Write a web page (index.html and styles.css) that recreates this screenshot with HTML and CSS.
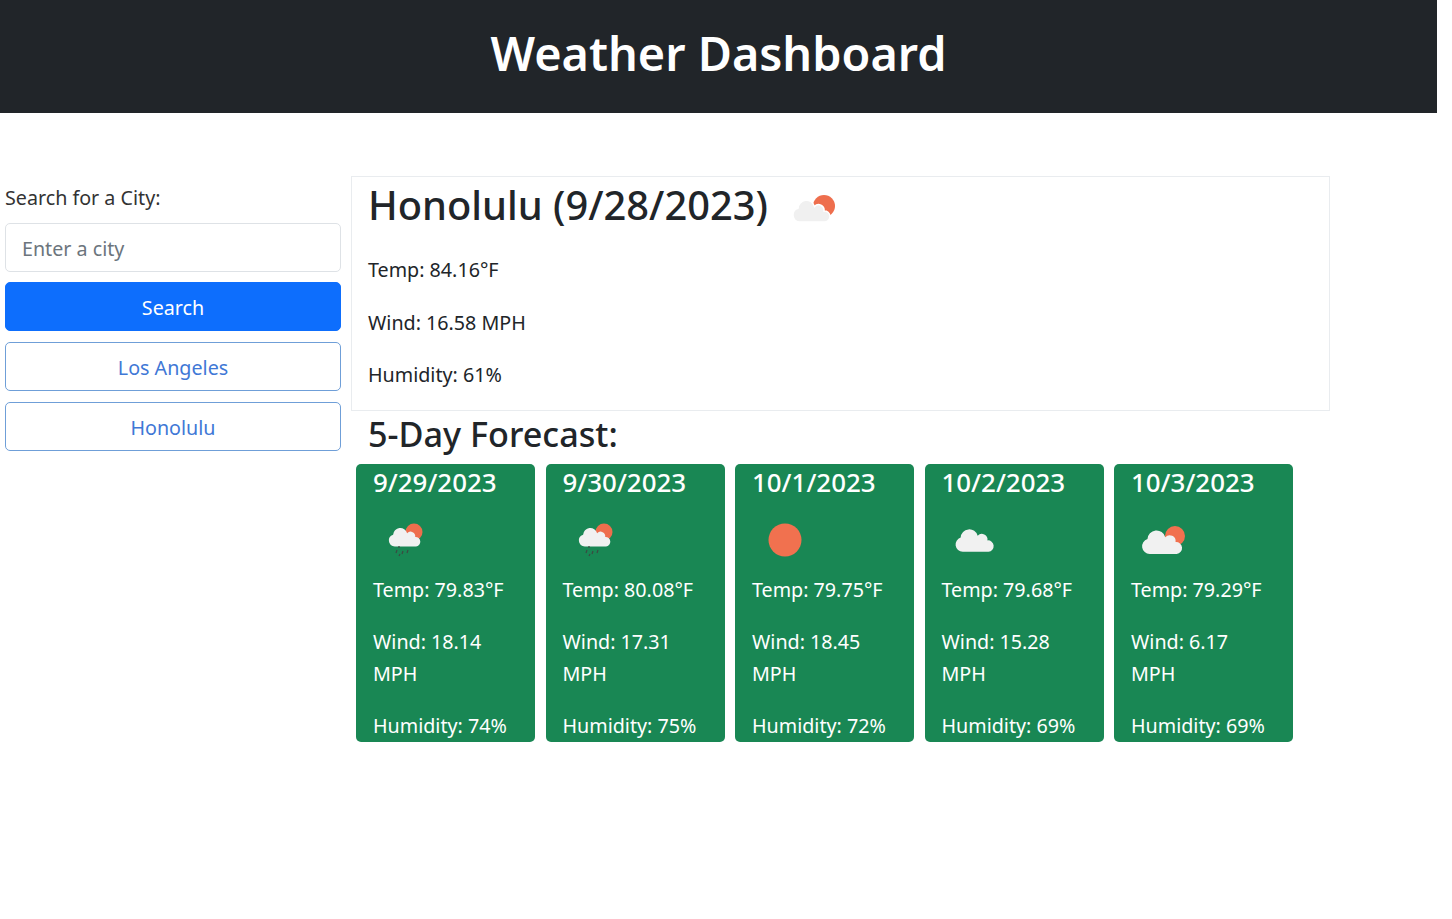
FILE: index.html
```html
<!DOCTYPE html>
<html lang="en">
<head>
    <meta charset="UTF-8">
    <meta name="viewport" content="width=device-width, initial-scale=1.0">
    <title>Weather Dashboard</title>
    <link rel="stylesheet" href="styles.css">
</head>
<body>
    <svg class="icon-defs" width="0" height="0">
        <defs>
            <path id="cloud" d="M8 24a7 7 0 0 1-2-13.700A8.400 8.400 0 0 1 22.500 8.500 5.500 5.500 0 0 1 32 13a5.500 5.500 0 0 1 1 11z"/>
        </defs>
    </svg>

    <header class="page-header">
        <h1>Weather Dashboard</h1>
    </header>

    <main class="layout">
        <aside class="search-panel">
            <label class="search-label" for="city">Search for a City:</label>
            <input class="search-input" type="text" id="city" placeholder="Enter a city">
            <button class="btn btn-primary" type="button">Search</button>
            <button class="btn btn-outline" type="button">Los Angeles</button>
            <button class="btn btn-outline" type="button">Honolulu</button>
        </aside>

        <section class="results">
            <div class="current">
                <h2 class="current-title">
                    <span>Honolulu (9/28/2023)</span>
                    <svg class="current-icon" viewBox="0 0 48 40" width="48" height="40">
                        <circle cx="32" cy="21" r="11" fill="#ee6e4d"/>
                        <use href="#cloud" transform="translate(0 13) scale(1)" fill="#f0f0f0" stroke="#fff" stroke-width="1.500"/>
                    </svg>
                </h2>
                <p>Temp: 84.16°F</p>
                <p>Wind: 16.58 MPH</p>
                <p>Humidity: 61%</p>
            </div>

            <h3 class="forecast-title">5-Day Forecast:</h3>

            <div class="forecast">
                <article class="day">
                    <h4>9/29/2023</h4>
                    <svg class="day-icon" viewBox="0 0 66 66" width="66" height="66">
                        <circle cx="41" cy="25" r="8.500" fill="#ee6e4d"/>
                        <use href="#cloud" transform="translate(15 19) scale(.85)" fill="#f1f1f1"/>
                        <path d="M26 39v2M24 43l-1 3M30 44l-1 3M35 43l-1 3M27 47l-1 2" stroke="#3c4a42" stroke-width="1.200" fill="none"/>
                    </svg>
                    <p>Temp: 79.83°F</p>
                    <p>Wind: 18.14 MPH</p>
                    <p>Humidity: 74%</p>
                </article>
                <article class="day">
                    <h4>9/30/2023</h4>
                    <svg class="day-icon" viewBox="0 0 66 66" width="66" height="66">
                        <circle cx="41" cy="25" r="8.500" fill="#ee6e4d"/>
                        <use href="#cloud" transform="translate(15 19) scale(.85)" fill="#f1f1f1"/>
                        <path d="M26 39v2M24 43l-1 3M30 44l-1 3M35 43l-1 3M27 47l-1 2" stroke="#3c4a42" stroke-width="1.200" fill="none"/>
                    </svg>
                    <p>Temp: 80.08°F</p>
                    <p>Wind: 17.31 MPH</p>
                    <p>Humidity: 75%</p>
                </article>
                <article class="day">
                    <h4>10/1/2023</h4>
                    <svg class="day-icon" viewBox="0 0 66 66" width="66" height="66">
                        <circle cx="33" cy="33" r="16.500" fill="#f1714f"/>
                    </svg>
                    <p>Temp: 79.75°F</p>
                    <p>Wind: 18.45 MPH</p>
                    <p>Humidity: 72%</p>
                </article>
                <article class="day">
                    <h4>10/2/2023</h4>
                    <svg class="day-icon" viewBox="0 0 66 66" width="66" height="66">
                        <use href="#cloud" transform="translate(12.500 20) scale(1.030)" fill="#f1f1f1"/>
                    </svg>
                    <p>Temp: 79.68°F</p>
                    <p>Wind: 15.28 MPH</p>
                    <p>Humidity: 69%</p>
                </article>
                <article class="day">
                    <h4>10/3/2023</h4>
                    <svg class="day-icon" viewBox="0 0 66 66" width="66" height="66">
                        <circle cx="44" cy="29" r="10" fill="#f1714f"/>
                        <use href="#cloud" transform="translate(10 21) scale(1.080)" fill="#f1f1f1"/>
                    </svg>
                    <p>Temp: 79.29°F</p>
                    <p>Wind: 6.17 MPH</p>
                    <p>Humidity: 69%</p>
                </article>
            </div>
        </section>
    </main>
</body>
</html>
```

FILE: styles.css
```css
* {
    box-sizing: border-box;
}

body {
    margin: 0;
    width: 1437px;
    font-family: "Noto Sans", sans-serif;
    font-size: 19.700px;
    line-height: 31.500px;
    color: #212529;
    background-color: #fff;
}

.icon-defs {
    position: absolute;
}

.page-header {
    height: 113px;
    padding-bottom: 6px;
    background-color: #212529;
    display: flex;
    justify-content: center;
    align-items: center;
}

.page-header h1 {
    margin: 0;
    color: #fff;
    font-size: 46.800px;
    font-weight: 600;
    line-height: 1.200;
}

.layout {
    display: flex;
    gap: 10px;
    padding: 63px 0 0 5px;
}

.search-panel {
    width: 336px;
    display: flex;
    flex-direction: column;
    padding-top: 6px;
}

.search-label {
    margin-bottom: 9px;
    color: #333;
}

.search-input {
    height: 49px;
    padding: 3px 16px 0;
    border: 1px solid #dee2e6;
    border-radius: 5px;
    font: inherit;
    color: #212529;
    margin-bottom: 10px;
}

.search-input::placeholder {
    color: #6c757d;
}

.btn {
    height: 49px;
    margin-bottom: 11px;
    padding: 3px 0 0;
    border-radius: 5px;
    font: inherit;
    cursor: pointer;
}

.btn-primary {
    background-color: #0d6efd;
    border: 1px solid #0d6efd;
    color: #fff;
}

.btn-outline {
    background-color: #fff;
    border: 1px solid #6f9fd8;
    color: #3f78d6;
}

.results {
    width: 979px;
}

.current {
    height: 235px;
    padding: 0 16px;
    border: 1px solid #e9ecef;
}

.current p {
    margin: 0 0 21px;
}

.current-title {
    margin: 0 0 22px;
    height: 55px;
    display: flex;
    align-items: center;
    gap: 24px;
    font-size: 39.800px;
    font-weight: 500;
    line-height: 55px;
}

.forecast-title {
    margin: 0 0 8px 17px;
    font-size: 34.200px;
    font-weight: 500;
    line-height: 45px;
}

.forecast {
    display: flex;
    gap: 10.500px;
    padding-left: 5px;
}

.day {
    width: 179px;
    height: 278px;
    padding: 0 17px;
    background-color: #198754;
    border-radius: 5px;
    color: #fff;
}

.day h4 {
    margin: 0;
    font-size: 25.900px;
    font-weight: 500;
    line-height: 36px;
}

.day p {
    margin: 0 0 21px;
}

.day-icon {
    display: block;
    margin: 7px 0 0.500px;
}
```
